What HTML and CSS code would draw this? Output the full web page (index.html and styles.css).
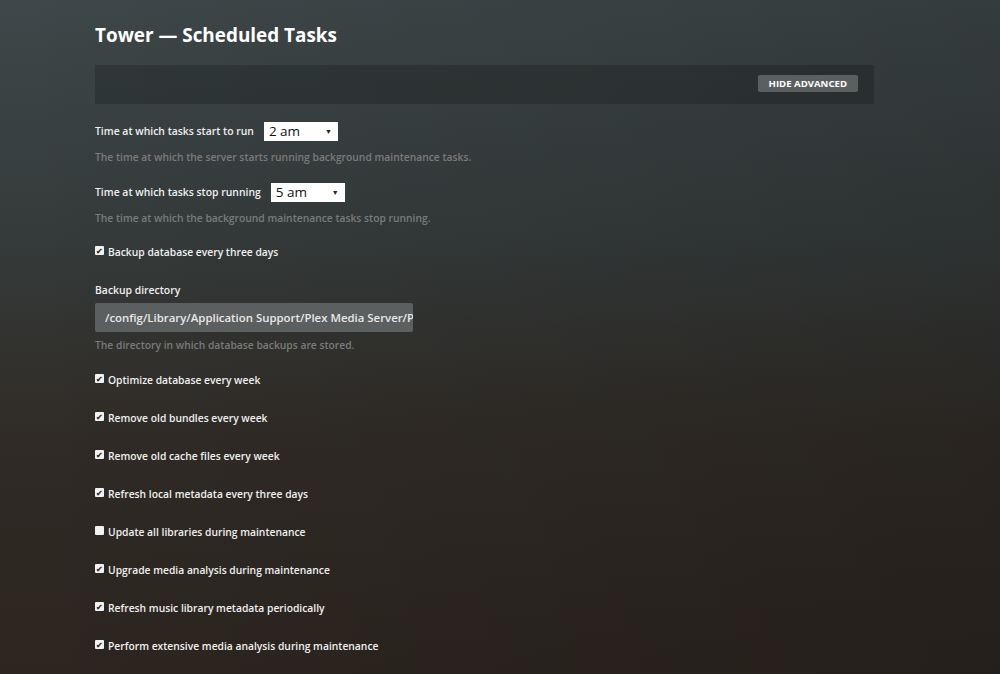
FILE: index.html
```html
<!DOCTYPE html>
<html lang="en">
<head>
    <meta charset="UTF-8">
    <meta name="viewport" content="width=device-width, initial-scale=1.0">
    <title>Scheduled Tasks</title>
    <link rel="stylesheet" href="styles.css">
</head>
<body>
    <div class="page">
        <h1 class="title">Tower — Scheduled Tasks</h1>

        <div class="toolbar">
            <button class="btn-advanced">Hide Advanced</button>
        </div>

        <div class="settings">
            <div class="setting">
                <div class="row">
                    <label class="label">Time at which tasks start to run</label>
                    <div class="select">2 am <span class="caret">▼</span></div>
                </div>
                <p class="help">The time at which the server starts running background maintenance tasks.</p>
            </div>

            <div class="setting">
                <div class="row">
                    <label class="label">Time at which tasks stop running</label>
                    <div class="select">5 am <span class="caret">▼</span></div>
                </div>
                <p class="help">The time at which the background maintenance tasks stop running.</p>
            </div>

            <div class="check"><span class="box on">✔</span>Backup database every three days</div>

            <div class="setting setting-dir">
                <label class="label">Backup directory</label>
                <input class="text-input" type="text" value="/config/Library/Application Support/Plex Media Server/Plug-in Support/Databases">
                <p class="help">The directory in which database backups are stored.</p>
            </div>

            <div class="check"><span class="box on">✔</span>Optimize database every week</div>
            <div class="check"><span class="box on">✔</span>Remove old bundles every week</div>
            <div class="check"><span class="box on">✔</span>Remove old cache files every week</div>
            <div class="check"><span class="box on">✔</span>Refresh local metadata every three days</div>
            <div class="check"><span class="box"></span>Update all libraries during maintenance</div>
            <div class="check"><span class="box on">✔</span>Upgrade media analysis during maintenance</div>
            <div class="check"><span class="box on">✔</span>Refresh music library metadata periodically</div>
            <div class="check"><span class="box on">✔</span>Perform extensive media analysis during maintenance</div>
        </div>
    </div>
</body>
</html>
```

FILE: styles.css
```css
html, body{
    height: 100%;
}

body{
    margin: 0;
    overflow: hidden;
    font-family: "Open Sans", "Liberation Sans", sans-serif;
    color: #f0f0f0;
    background:
        linear-gradient(90deg, rgba(0,0,0,0) 0%, rgba(0,0,0,0.16) 100%),
        linear-gradient(180deg, #3e4749 0%, #353b3b 35%, #302b26 65%, #2c2520 100%);
}

.page{
    width: 779px;
    padding: 22px 0 0 95px;
}

.title{
    margin: 0;
    font-size: 18.9px;
    font-weight: 700;
    line-height: 26px;
    color: #ffffff;
}

.toolbar{
    display: flex;
    justify-content: flex-end;
    align-items: center;
    height: 39px;
    margin-top: 17px;
    padding-right: 16px;
    background: rgba(0,0,0,0.18);
}

.btn-advanced{
    height: 17px;
    margin-top: -2px;
    padding: 0 11px;
    border: none;
    border-radius: 2px;
    background: #5b5f60;
    color: #ffffff;
    font-family: inherit;
    font-size: 9.6px;
    font-weight: 700;
    text-transform: uppercase;
    line-height: 17px;
}

.settings{
    padding-top: 18px;
}

.setting{
    margin-bottom: 19px;
}

.row{
    display: flex;
    align-items: center;
    gap: 10px;
}

.label{
    display: block;
    font-size: 10.4px;
    font-weight: 600;
    line-height: 19px;
}

.select{
    display: flex;
    justify-content: space-between;
    align-items: center;
    width: 74px;
    height: 19px;
    padding: 0 6px 0 5px;
    box-sizing: border-box;
    background: #ffffff;
    color: #111111;
    font-size: 13.5px;
    line-height: 19px;
}

.caret{
    font-size: 7px;
    color: #222222;
}

.help{
    margin: 9px 0 0;
    font-size: 10.3px;
    font-weight: 600;
    line-height: 14px;
    color: #7a7b7b;
}

.check{
    display: flex;
    align-items: center;
    height: 16px;
    margin-bottom: 22px;
    font-size: 10.3px;
    font-weight: 600;
}

.box{
    display: inline-flex;
    justify-content: center;
    align-items: center;
    width: 9px;
    height: 9px;
    margin: -3px 4px 0 0;
    border-radius: 1px;
    background: #f2f2f2;
    color: #333333;
    font-size: 8px;
    line-height: 9px;
}

.setting-dir{
    margin-top: -1px;
    margin-bottom: 20px;
}

.setting-dir .label{
    margin-bottom: 3px;
}

.text-input{
    display: block;
    width: 318px;
    height: 29px;
    padding: 0 0 0 10px;
    box-sizing: border-box;
    border: none;
    border-radius: 2px;
    outline: none;
    background: #5c5f5f;
    color: #e8e8e8;
    font-family: inherit;
    font-size: 11.4px;
    font-weight: 600;
}

.setting-dir .help{
    margin-top: 6px;
}
```
